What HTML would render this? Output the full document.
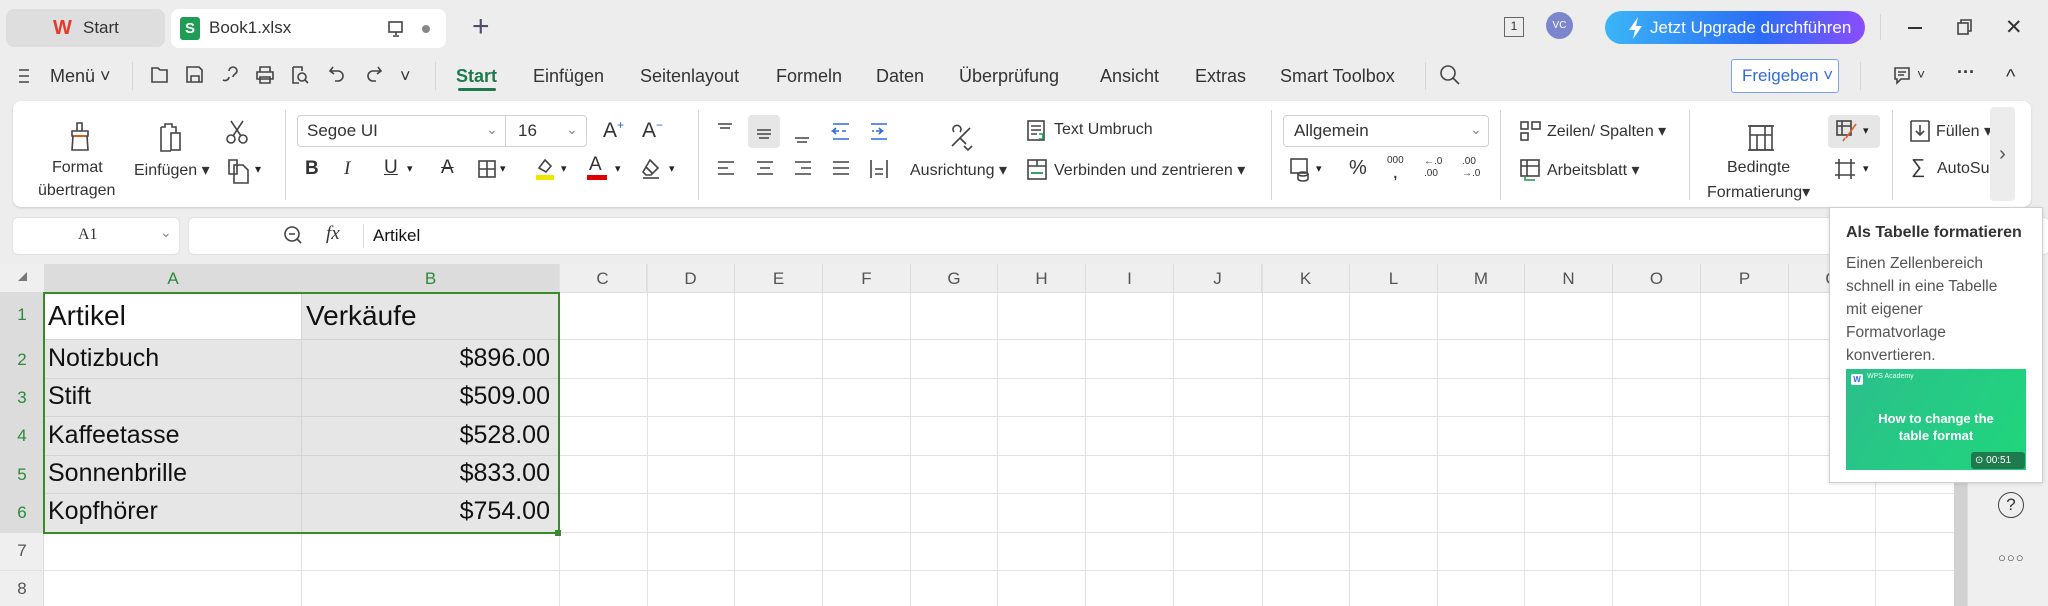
<!DOCTYPE html>
<html><head><meta charset="utf-8">
<style>
*{margin:0;padding:0;box-sizing:border-box}
body{width:2048px;height:606px;overflow:hidden;background:#ededed;font-family:"Liberation Sans",sans-serif;color:#222;position:relative}
.a{position:absolute;white-space:nowrap}
.t{font-size:18px;color:#333}
.sep{position:absolute;width:1px;background:#d6d6d6}
svg{position:absolute;overflow:visible}
.ic{fill:none;stroke:#444;stroke-width:1.6}
.col{position:absolute;top:264px;height:29px;font-size:17px;color:#555;text-align:center;line-height:29px;border-right:1px solid #dcdcdc}
.rh{position:absolute;left:0;width:44px;text-align:center;font-size:17px;color:#555}
.cell{position:absolute;font-size:25px;color:#111}
</style></head><body>
<!-- tab bar -->
<div class="a" style="left:6px;top:9px;width:159px;height:38px;background:#dedede;border-radius:8px"></div>
<div class="a" style="left:53px;top:17px;font-size:20px;font-weight:bold;color:#e53a2b">W</div>
<div class="a t" style="left:83px;top:18px;font-size:17px">Start</div>
<div class="a" style="left:171px;top:9px;width:275px;height:39px;background:#fff;border-radius:8px"></div>
<div class="a" style="left:180px;top:17px;width:20px;height:23px;background:#1f9d55;border-radius:3px;color:#fff;font-size:15px;font-weight:bold;text-align:center;line-height:23px">S</div>
<div class="a t" style="left:209px;top:18px;font-size:17px">Book1.xlsx</div>
<svg style="left:388px;top:21px" width="16" height="16"><rect x="1" y="1" width="13" height="10" class="ic" stroke="#888"/><path d="M8 11v3M5 15h6" class="ic" stroke="#888"/></svg>
<div class="a" style="left:422px;top:25px;width:8px;height:8px;border-radius:50%;background:#888"></div>
<div class="a" style="left:472px;top:10px;font-size:30px;color:#4a4f6a">+</div>
<div class="a" style="left:1504px;top:17px;width:20px;height:20px;border:1.5px solid #666;font-size:12px;text-align:center;line-height:17px;color:#333">1</div>
<div class="a" style="left:1546px;top:12px;width:27px;height:27px;border-radius:50%;background:#7c86cf;color:#fff;font-size:10px;text-align:center;line-height:27px">VC</div>
<div class="a" style="left:1605px;top:11px;width:260px;height:33px;border-radius:17px;background:linear-gradient(90deg,#3bb5f7,#2b6cf6 60%,#8a4dff);color:#fff;font-size:17px;line-height:33px;padding-left:45px">Jetzt Upgrade durchführen</div>
<svg style="left:1628px;top:17px" width="16" height="22"><path d="M10 0L1 13h6l-2 9 9-13H8z" fill="#fff"/></svg>
<div class="sep" style="left:1880px;top:14px;height:26px"></div>
<div class="a" style="left:1908px;top:27px;width:14px;height:1.5px;background:#333"></div>
<svg style="left:1957px;top:19px" width="16" height="16"><rect x="1" y="4" width="10" height="11" class="ic" stroke="#333"/><path d="M4 4V1h10v11h-3" class="ic" stroke="#333"/></svg>
<div class="a" style="left:2005px;top:15px;font-size:21px;color:#333">✕</div>
<!-- menu row -->
<svg style="left:18px;top:68px" width="14" height="16"><path d="M1 2h10M1 8h10M1 14h10" class="ic"/></svg>
<div class="a t" style="left:50px;top:66px">Menü ˅</div>
<div class="sep" style="left:132px;top:62px;height:28px"></div>
<svg style="left:150px;top:65px" width="20" height="20"><path d="M2 3h6l2 2h7v12H2z" class="ic"/></svg>
<svg style="left:185px;top:65px" width="20" height="20"><path d="M2 2h12l3 3v12H2zM6 17v-6h8v6" class="ic"/></svg>
<svg style="left:221px;top:65px" width="20" height="20"><path d="M8 6a4 4 0 0 1 8 0c0 3-4 3-4 6M8 12a4 4 0 0 1-6 3" class="ic"/></svg>
<svg style="left:255px;top:65px" width="20" height="20"><path d="M5 7V2h10v5M2 7h16v7H2zM5 12h10v6H5z" class="ic"/></svg>
<svg style="left:290px;top:65px" width="20" height="20"><path d="M3 2h9v4M3 2v16h6" class="ic"/><circle cx="12" cy="12" r="4" class="ic"/><path d="M15 15l3 3" class="ic"/></svg>
<svg style="left:328px;top:65px" width="20" height="20"><path d="M5 2L2 6l4 3M2 6h8a5 5 0 0 1 0 10H7" class="ic"/></svg>
<svg style="left:364px;top:65px" width="20" height="20"><path d="M14 2l3 4-4 3M17 6H9a5 5 0 0 0 0 10h3" class="ic"/></svg>
<div class="a t" style="left:400px;top:66px">˅</div>
<div class="sep" style="left:435px;top:62px;height:28px"></div>
<div class="a" style="left:456px;top:66px;font-size:18px;font-weight:bold;color:#1d7a4e">Start</div>
<div class="a" style="left:458px;top:88px;width:38px;height:3px;background:#1d7a4e;border-radius:2px"></div>
<div class="a t" style="left:533px;top:66px">Einfügen</div>
<div class="a t" style="left:640px;top:66px">Seitenlayout</div>
<div class="a t" style="left:776px;top:66px">Formeln</div>
<div class="a t" style="left:876px;top:66px">Daten</div>
<div class="a t" style="left:959px;top:66px">Überprüfung</div>
<div class="a t" style="left:1100px;top:66px">Ansicht</div>
<div class="a t" style="left:1195px;top:66px">Extras</div>
<div class="a t" style="left:1280px;top:66px">Smart Toolbox</div>
<div class="sep" style="left:1425px;top:62px;height:28px"></div>
<svg style="left:1440px;top:65px" width="22" height="22"><circle cx="8" cy="8" r="7" class="ic"/><path d="M13 13l6 6" class="ic"/></svg>
<div class="a" style="left:1731px;top:59px;width:108px;height:34px;border:1.5px solid #7aa3f5;border-radius:3px;background:#fff;color:#2f6ae0;font-size:17px;line-height:31px;padding-left:10px">Freigeben ˅</div>
<div class="sep" style="left:1860px;top:62px;height:28px"></div>
<svg style="left:1893px;top:66px" width="20" height="20"><path d="M2 2h14v11H8l-4 4v-4H2z" class="ic"/><path d="M5 6h8M5 9h6" class="ic"/></svg>
<div class="a t" style="left:1917px;top:66px;font-size:14px">˅</div>
<div class="a t" style="left:1957px;top:62px;font-weight:bold">···</div>
<div class="a t" style="left:2006px;top:66px;font-size:20px">^</div>
<!-- ribbon -->
<div class="a" style="left:13px;top:101px;width:2018px;height:106px;background:#fff;border-radius:8px;box-shadow:0 1px 2px rgba(0,0,0,.15)"></div>
<div class="a" style="left:1990px;top:107px;width:25px;height:94px;background:#ececec;border-radius:4px;font-size:20px;color:#555;text-align:center;line-height:94px">›</div>
<svg style="left:68px;top:122px" width="24" height="30"><path d="M9 1h5v8H9zM4 9h16v5H4zM5 14l-1 14h16l-1-14" class="ic"/><path d="M6 14h12" stroke="#d06020" stroke-width="2"/></svg>
<div class="a" style="left:52px;top:159px;font-size:16px;color:#333">Format</div>
<div class="a" style="left:38px;top:182px;font-size:16px;color:#333">übertragen</div>
<svg style="left:158px;top:122px" width="28" height="32"><path d="M3 5h4V2h7v3h4v6M3 5v24h10" class="ic"/><rect x="13" y="11" width="9" height="17" class="ic" stroke="#2f6ae0"/></svg>
<div class="a" style="left:134px;top:160px;font-size:16px;color:#333">Einfügen ▾</div>
<svg style="left:226px;top:120px" width="22" height="24"><path d="M5 1l10 15M17 1L7 16" class="ic"/><circle cx="5" cy="19" r="4" class="ic" stroke="#2f6ae0"/><circle cx="17" cy="19" r="4" class="ic" stroke="#2f6ae0"/></svg>
<svg style="left:228px;top:158px" width="22" height="26"><path d="M1 2h8v14H1z" class="ic" stroke="#2f6ae0"/><path d="M6 7h9l5 5v13H6z" class="ic"/></svg>
<div class="a" style="left:255px;top:162px;font-size:12px">▾</div>
<div class="sep" style="left:285px;top:110px;height:90px"></div>
<div class="a" style="left:297px;top:115px;width:290px;height:32px;border:1px solid #d0d0d0;border-radius:4px"></div>
<div class="a" style="left:505px;top:116px;width:1px;height:30px;background:#d0d0d0"></div>
<div class="a" style="left:307px;top:121px;font-size:17px;color:#333">Segoe UI</div>
<div class="a" style="left:486px;top:121px;font-size:14px;color:#888">⌄</div>
<div class="a" style="left:518px;top:121px;font-size:17px;color:#333">16</div>
<div class="a" style="left:566px;top:121px;font-size:14px;color:#888">⌄</div>
<div class="a" style="left:603px;top:118px;font-size:21px;color:#333">A<sup style="font-size:12px;color:#2f6ae0">+</sup></div>
<div class="a" style="left:642px;top:118px;font-size:21px;color:#333">A<sup style="font-size:12px;color:#2f6ae0">−</sup></div>
<div class="a" style="left:305px;top:158px;font-size:19px;font-weight:bold;color:#333">B</div>
<div class="a" style="left:344px;top:158px;font-size:19px;font-style:italic;font-family:'Liberation Serif',serif;color:#333">I</div>
<div class="a" style="left:384px;top:157px;font-size:19px;text-decoration:underline;color:#333">U</div>
<div class="a" style="left:407px;top:162px;font-size:11px">▾</div>
<div class="a" style="left:441px;top:157px;font-size:19px;text-decoration:line-through;color:#333">A</div>
<svg style="left:478px;top:160px" width="18" height="18"><rect x="1" y="1" width="16" height="16" class="ic"/><path d="M9 1v16M1 9h16" class="ic"/></svg>
<div class="a" style="left:500px;top:162px;font-size:11px">▾</div>
<svg style="left:535px;top:156px" width="20" height="26"><path d="M4 12l6-8 6 6-5 6z" class="ic"/><rect x="1" y="19" width="18" height="5" fill="#f3e300"/></svg>
<div class="a" style="left:561px;top:162px;font-size:11px">▾</div>
<div class="a" style="left:589px;top:154px;font-size:19px;color:#333">A</div>
<div class="a" style="left:587px;top:175px;width:20px;height:5px;background:#e00000"></div>
<div class="a" style="left:615px;top:162px;font-size:11px">▾</div>
<svg style="left:641px;top:158px" width="20" height="22"><path d="M9 2l8 8-7 7H5l-3-3z M5 9l7 7" class="ic"/><path d="M2 20h16" class="ic"/></svg>
<div class="a" style="left:669px;top:162px;font-size:11px">▾</div>
<div class="sep" style="left:698px;top:110px;height:90px"></div>
<div class="a" style="left:748px;top:115px;width:32px;height:33px;background:#e6e6e6;border-radius:4px"></div>
<svg style="left:716px;top:122px" width="180" height="60">
<g class="ic" stroke-width="1.5">
<path d="M2 2h14M4 6h10"/>
<path d="M41 8h14M41 12h14M43 16h10"/>
<path d="M79 16h14M81 20h10"/>
<path d="M117 2h16M123 9h-6l3-3M123 9h-6l3 3M126 9h4M117 17h16" stroke="#2f6ae0"/>
<path d="M155 2h16M160 9h6l-3-3M160 9h6l-3 3M156 9h2M155 17h16" stroke="#2f6ae0"/>
<path d="M2 40h16M2 46h10M2 52h16"/>
<path d="M41 40h16M44 46h10M41 52h16"/>
<path d="M79 40h16M85 46h10M79 52h16"/>
<path d="M117 40h16M117 46h16M117 52h16"/>
<path d="M155 38v18M171 38v18M159 47h8M159 52h8"/>
</g></svg>
<svg style="left:948px;top:124px" width="26" height="28"><path d="M4 22L22 4M6 8a4 4 0 1 1 6 0M12 14l6 6M16 22l4 4 4-4" class="ic"/></svg>
<div class="a" style="left:910px;top:160px;font-size:16px;color:#333">Ausrichtung ▾</div>
<svg style="left:1027px;top:120px" width="20" height="22"><rect x="1" y="1" width="16" height="19" class="ic"/><path d="M4 6h10M4 10h10M4 14h6" class="ic"/><path d="M12 14h4v5h-4" stroke="#1d9a50" stroke-width="1.6" fill="none"/></svg>
<div class="a" style="left:1054px;top:121px;font-size:16px;color:#333">Text Umbruch</div>
<svg style="left:1027px;top:159px" width="20" height="22"><rect x="1" y="1" width="18" height="19" class="ic"/><path d="M1 7h18M10 1v6" class="ic"/><path d="M4 14h12" stroke="#1d9a50" stroke-width="1.8"/></svg>
<div class="a" style="left:1054px;top:160px;font-size:16px;color:#333">Verbinden und zentrieren ▾</div>
<div class="sep" style="left:1271px;top:110px;height:90px"></div>
<div class="a" style="left:1283px;top:115px;width:206px;height:32px;border:1px solid #d0d0d0;border-radius:4px"></div>
<div class="a" style="left:1294px;top:121px;font-size:17px;color:#333">Allgemein</div>
<div class="a" style="left:1470px;top:121px;font-size:14px;color:#888">⌄</div>
<svg style="left:1290px;top:158px" width="22" height="24"><rect x="1" y="1" width="16" height="14" class="ic"/><ellipse cx="13" cy="16" rx="5" ry="2" class="ic"/><path d="M8 16v5a5 2 0 0 0 10 0v-5" class="ic"/></svg>
<div class="a" style="left:1316px;top:162px;font-size:11px">▾</div>
<div class="a" style="left:1349px;top:157px;font-size:20px;color:#333">%</div>
<div class="a" style="left:1387px;top:155px;font-size:10px;color:#333;line-height:12px;text-align:center">000<br><b style="font-size:14px">,</b></div>
<div class="a" style="left:1424px;top:156px;font-size:10px;color:#333;line-height:12px">←.0<br>.00</div>
<div class="a" style="left:1462px;top:156px;font-size:10px;color:#333;line-height:12px">.00<br>→.0</div>
<div class="sep" style="left:1500px;top:110px;height:90px"></div>
<svg style="left:1520px;top:121px" width="22" height="20"><rect x="1" y="1" width="7" height="7" class="ic" stroke="#1d9a50"/><rect x="12" y="1" width="8" height="7" class="ic"/><rect x="1" y="12" width="7" height="7" class="ic"/></svg>
<div class="a" style="left:1547px;top:121px;font-size:16px;color:#333">Zeilen/ Spalten ▾</div>
<svg style="left:1520px;top:159px" width="22" height="22"><rect x="1" y="1" width="18" height="16" class="ic"/><path d="M1 7h18M7 1v16" class="ic"/><path d="M5 17v4h10" stroke="#1d9a50" stroke-width="1.6" fill="none"/></svg>
<div class="a" style="left:1547px;top:160px;font-size:16px;color:#333">Arbeitsblatt ▾</div>
<div class="sep" style="left:1689px;top:110px;height:90px"></div>
<svg style="left:1747px;top:123px" width="28" height="30"><rect x="3" y="3" width="22" height="24" class="ic"/><path d="M1 3h26M1 27h26M3 12h22M10 12v15M18 3v24" class="ic"/></svg>
<div class="a" style="left:1727px;top:159px;font-size:16px;color:#333">Bedingte</div>
<div class="a" style="left:1707px;top:182px;font-size:16px;color:#333">Formatierung▾</div>
<div class="a" style="left:1828px;top:115px;width:52px;height:33px;background:#e6e6e6;border-radius:4px"></div>
<svg style="left:1836px;top:120px" width="24" height="22"><rect x="1" y="1" width="14" height="14" class="ic"/><path d="M1 6h14M6 1v14" class="ic"/><path d="M20 4L10 18M9 18l-2 3" stroke="#e06020" stroke-width="1.6" fill="none"/></svg>
<div class="a" style="left:1863px;top:124px;font-size:11px">▾</div>
<svg style="left:1834px;top:158px" width="22" height="22"><path d="M5 1v20M17 1v20M1 5h20M1 17h20" class="ic"/></svg>
<div class="a" style="left:1863px;top:162px;font-size:11px">▾</div>
<div class="sep" style="left:1892px;top:110px;height:90px"></div>
<svg style="left:1910px;top:120px" width="20" height="22"><path d="M1 1h18M1 1v20h18V1M10 5v10M6 11l4 4 4-4" class="ic"/></svg>
<div class="a" style="left:1936px;top:121px;font-size:16px;color:#333;width:54px;overflow:hidden">Füllen ▾</div>
<div class="a" style="left:1911px;top:156px;font-size:20px;color:#333">∑</div>
<div class="a" style="left:1937px;top:160px;font-size:16px;color:#333;width:53px;overflow:hidden">AutoSumme</div>
<!-- formula bar -->
<div class="a" style="left:13px;top:218px;width:166px;height:36px;background:#fff;border-radius:5px;box-shadow:0 0 0 1px #e2e2e2"></div>
<div class="a" style="left:78px;top:226px;font-size:16px;font-family:'Liberation Serif',serif;color:#333">A1</div>
<div class="a" style="left:160px;top:224px;font-size:14px;color:#888">⌄</div>
<div class="a" style="left:189px;top:218px;width:1860px;height:36px;background:#fff;border-radius:5px;box-shadow:0 0 0 1px #e2e2e2"></div>
<svg style="left:284px;top:226px" width="20" height="20"><circle cx="8" cy="8" r="7" class="ic"/><path d="M5 8h6M13 13l4 4" class="ic"/></svg>
<div class="a" style="left:326px;top:223px;font-size:19px;font-style:italic;font-family:'Liberation Serif',serif;color:#333">fx</div>
<div class="a" style="left:363px;top:224px;width:1px;height:24px;background:#ddd"></div>
<div class="a" style="left:373px;top:226px;font-size:17px;color:#111">Artikel</div>
<!-- grid -->
<div class="a" style="left:0;top:264px;width:1954px;height:342px;background:#fff"></div>
<div class="a" style="left:0;top:264px;width:1954px;height:29px;background:#efefef;border-bottom:1px solid #dcdcdc"></div>
<div class="a" style="left:0;top:293px;width:44px;height:313px;background:#efefef;border-right:1px solid #dcdcdc"></div>
<div class="a" style="left:0;top:293px;width:44px;height:240px;background:#dcdcdc"></div>
<div class="a" style="left:44px;top:264px;width:515px;height:29px;background:#dcdcdc"></div>
<div class="a" style="left:18px;top:272px;width:0;height:0;border-left:9px solid transparent;border-bottom:9px solid #777"></div>
<svg style="left:0;top:0" width="2048" height="606">
<g stroke="#e2e2e2" stroke-width="1">
<path d="M44 339.5H1954M44 378.5H1954M44 416.5H1954M44 455.5H1954M44 493.5H1954M44 532.5H1954M44 570.5H1954M0 570.5H44"/>
<path d="M301.5 293V606M559.5 264V606M647.5 264V606M734.5 264V606M822.5 264V606M910.5 264V606M997.5 264V606M1085.5 264V606M1173.5 264V606M1262.5 264V606M1349.5 264V606M1437.5 264V606M1524.5 264V606M1612.5 264V606M1700.5 264V606M1788.5 264V606M1875.5 264V606"/>
</g></svg>
<div class="a" style="left:45px;top:340px;width:513px;height:192px;background:#e6e6e6"></div>
<div class="a" style="left:302px;top:294px;width:256px;height:45px;background:#e6e6e6"></div>
<div class="a" style="left:44px;top:339px;width:515px;height:1px;background:#d4d4d4"></div>
<div class="a" style="left:44px;top:378px;width:515px;height:1px;background:#d4d4d4"></div>
<div class="a" style="left:44px;top:416px;width:515px;height:1px;background:#d4d4d4"></div>
<div class="a" style="left:44px;top:455px;width:515px;height:1px;background:#d4d4d4"></div>
<div class="a" style="left:44px;top:493px;width:515px;height:1px;background:#d4d4d4"></div>
<div class="a" style="left:301px;top:293px;width:1px;height:240px;background:#d4d4d4"></div>
<div class="a" style="left:43px;top:292px;width:517px;height:242px;border:2px solid #3a8a2a"></div>
<div class="a" style="left:555px;top:530px;width:6px;height:6px;background:#3a8a2a"></div>
<div class="col" style="left:44px;width:258px;color:#2a8a3a;border:none">A</div>
<div class="col" style="left:302px;width:257px;color:#2a8a3a;border:none">B</div>
<div class="col" style="left:559px;width:88px">C</div>
<div class="col" style="left:647px;width:88px">D</div>
<div class="col" style="left:735px;width:88px">E</div>
<div class="col" style="left:823px;width:88px">F</div>
<div class="col" style="left:911px;width:87px">G</div>
<div class="col" style="left:998px;width:88px">H</div>
<div class="col" style="left:1086px;width:88px">I</div>
<div class="col" style="left:1174px;width:88px">J</div>
<div class="col" style="left:1262px;width:88px">K</div>
<div class="col" style="left:1350px;width:88px">L</div>
<div class="col" style="left:1438px;width:87px">M</div>
<div class="col" style="left:1525px;width:88px">N</div>
<div class="col" style="left:1613px;width:88px">O</div>
<div class="col" style="left:1701px;width:88px">P</div>
<div class="col" style="left:1789px;width:87px">Q</div>
<div class="rh" style="top:305px;color:#2a8a3a">1</div>
<div class="rh" style="top:350px;color:#2a8a3a">2</div>
<div class="rh" style="top:388px;color:#2a8a3a">3</div>
<div class="rh" style="top:426px;color:#2a8a3a">4</div>
<div class="rh" style="top:465px;color:#2a8a3a">5</div>
<div class="rh" style="top:503px;color:#2a8a3a">6</div>
<div class="rh" style="top:541px">7</div>
<div class="rh" style="top:579px">8</div>
<div class="cell" style="left:48px;top:300px;font-size:28px">Artikel</div>
<div class="cell" style="left:306px;top:300px;font-size:28px">Verkäufe</div>
<div class="cell" style="left:48px;top:344px">Notizbuch</div>
<div class="cell" style="left:48px;top:382px">Stift</div>
<div class="cell" style="left:48px;top:421px">Kaffeetasse</div>
<div class="cell" style="left:48px;top:459px">Sonnenbrille</div>
<div class="cell" style="left:48px;top:497px">Kopfhörer</div>
<div class="cell" style="right:1498px;top:344px">$896.00</div>
<div class="cell" style="right:1498px;top:382px">$509.00</div>
<div class="cell" style="right:1498px;top:421px">$528.00</div>
<div class="cell" style="right:1498px;top:459px">$833.00</div>
<div class="cell" style="right:1498px;top:497px">$754.00</div>
<!-- scrollbar & sidebar -->
<div class="a" style="left:1954px;top:264px;width:13px;height:342px;background:#d2d2d2"></div>
<div class="a" style="left:1967px;top:256px;width:81px;height:350px;background:#efefef;border-left:1px solid #dedede"></div>
<div class="a" style="left:1998px;top:492px;width:26px;height:26px;border:1.6px solid #444;border-radius:50%;text-align:center;font-size:17px;line-height:23px;color:#333">?</div>
<div class="a" style="left:1998px;top:550px;font-size:13px;color:#444;letter-spacing:1px">○○○</div>
<!-- tooltip -->
<div class="a" style="left:1829px;top:207px;width:214px;height:276px;background:#fff;border:1px solid #cfcfcf;box-shadow:0 1px 4px rgba(0,0,0,.12)"></div>
<div class="a" style="left:1846px;top:224px;font-size:16px;font-weight:bold;color:#333">Als Tabelle formatieren</div>
<div class="a" style="left:1846px;top:252px;font-size:15.5px;color:#555;line-height:23px">Einen Zellenbereich<br>schnell in eine Tabelle<br>mit eigener<br>Formatvorlage<br>konvertieren.</div>
<div class="a" style="left:1846px;top:369px;width:180px;height:101px;background:linear-gradient(120deg,#2bbf8c,#20d67c)"></div>
<div class="a" style="left:1851px;top:374px;width:12px;height:11px;background:#fff;border-radius:2px;font-size:8px;color:#2b6cf6;text-align:center;line-height:11px;font-weight:bold">W</div>
<div class="a" style="left:1867px;top:373px;font-size:7px;color:#e8fff4">WPS Academy</div>
<div class="a" style="left:1846px;top:410px;width:180px;text-align:center;font-size:13px;font-weight:bold;color:#fff;line-height:17px">How to change the<br>table format</div>
<div class="a" style="left:1971px;top:452px;width:54px;height:17px;background:#1f7a4e;border-radius:3px;font-size:10px;color:#fff;line-height:17px;padding-left:4px">⊙ 00:51</div>
</body></html>
